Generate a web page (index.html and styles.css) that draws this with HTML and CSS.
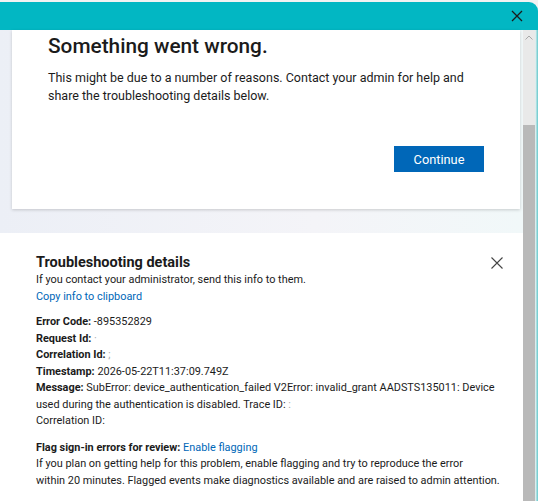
FILE: index.html
```html
<!DOCTYPE html>
<html>
<head>
<meta charset="utf-8">
<link rel="stylesheet" href="styles.css">
</head>
<body>
<div class="window">
  <div class="titlebar">
    <svg class="title-close" width="12" height="12" viewBox="0 0 12 12"><path d="M1 1L11 11M11 1L1 11" stroke="#1b1b1b" stroke-width="1.3" fill="none"/></svg>
  </div>
  <div class="main">
    <div class="content">
      <div class="card">
        <h1 class="title">Something went wrong.</h1>
        <p class="lead">This might be due to a number of reasons. Contact your admin for help and share the troubleshooting details below.</p>
        <div class="actions"><button class="btn">Continue</button></div>
      </div>
      <div class="backdrop"></div>
      <div class="details">
        <div class="details-head">
          <h2 class="details-title">Troubleshooting details</h2>
          <svg class="details-close" width="12" height="12" viewBox="0 0 12 12"><path d="M0.5 0.5L11.5 11.5M11.5 0.5L0.5 11.5" stroke="#444" stroke-width="1.1" fill="none"/></svg>
        </div>
        <div class="line">If you contact your administrator, send this info to them.</div>
        <div class="line"><a class="link">Copy info to clipboard</a></div>
        <div class="info">
          <div class="line"><b>Error Code:</b> -895352829</div>
          <div class="line"><b>Request Id:</b> <span class="dim">·</span></div>
          <div class="line"><b>Correlation Id:</b> <span class="dim">;</span></div>
          <div class="line"><b>Timestamp:</b> 2026-05-22T11:37:09.749Z</div>
          <div class="line"><b>Message:</b> SubError: device_authentication_failed V2Error: invalid_grant AADSTS135011: Device used during the authentication is disabled. Trace ID: <span class="dim">:</span></div>
          <div class="line">Correlation ID:</div>
        </div>
        <div class="flag">
          <div class="line"><b>Flag sign-in errors for review:</b> <a class="link">Enable flagging</a></div>
          <div class="line">If you plan on getting help for this problem, enable flagging and try to reproduce the error<br>within 20 minutes. Flagged events make diagnostics available and are raised to admin attention.</div>
        </div>
      </div>
    </div>
    <div class="scrollbar">
      <div class="track">
        <svg class="arrow" width="8" height="5" viewBox="0 0 8 5"><path d="M0.5 4.5L4 1L7.5 4.5" stroke="#a8a8a8" fill="none"/></svg>
      </div>
      <div class="thumb"></div>
    </div>
    <div class="edge"></div>
  </div>
</div>
</body>
</html>
```

FILE: styles.css
```css
* { box-sizing: border-box; }
html, body { margin: 0; padding: 0; }
body {
  width: 538px;
  height: 501px;
  overflow: hidden;
  background: #f2f2f2;
  font-family: "Roboto", "Noto Sans", sans-serif;
  color: #1b1b1b;
}
.window {
  display: flex;
  flex-direction: column;
  height: 501px;
  padding-top: 2px;
}
.titlebar {
  height: 28px;
  background: #02b7c3;
  border-top-right-radius: 9px;
  display: flex;
  justify-content: flex-end;
  align-items: center;
  padding-right: 15px;
  flex: none;
}
.title-close { display: block; }
.main {
  flex: 1;
  display: flex;
  min-height: 0;
}
.content {
  flex: 1;
  display: flex;
  flex-direction: column;
  background: linear-gradient(90deg, #eceff6 0%, #f4f4f8 60%, #f1f8f9 100%);
}
.card {
  margin-left: 12px;
  margin-right: 3px;
  height: 179px;
  background: #fff;
  box-shadow: 0 1px 3px rgba(0,0,0,0.18);
  padding: 3px 36px 0 36px;
  display: flex;
  flex-direction: column;
  flex: none;
}
.title {
  margin: 0;
  font-size: 20.8px;
  font-weight: 500;
  line-height: 26px;
  color: #1b1b1b;
}
.lead {
  margin: 10px 0 0 0;
  font-size: 12.5px;
  line-height: 18px;
  color: #1b1b1b;
}
.actions {
  display: flex;
  justify-content: flex-end;
  margin-top: 41px;
}
.btn {
  width: 90px;
  height: 26px;
  background: #0067b8;
  color: #fff;
  border: none;
  font-family: inherit;
  font-size: 12.8px;
  padding: 0;
}
.backdrop { height: 24px; flex: none; }
.details {
  flex: 1;
  background: #fff;
  padding: 21px 20px 0 36px;
  font-size: 10.9px;
  line-height: 16.5px;
}
.details-head {
  display: flex;
  justify-content: space-between;
  align-items: center;
  padding-right: 0;
}
.details-title {
  margin: 0;
  font-size: 14.5px;
  font-weight: 700;
  line-height: 18px;
}
.line { white-space: normal; }
.link { color: #0067b8; }
.info { margin-top: 9px; }
.flag { margin-top: 10px; }
.dim { color: #aaa; }
b { font-weight: 700; }
.scrollbar {
  width: 12px;
  display: flex;
  flex-direction: column;
  flex: none;
}
.track {
  height: 95px;
  background: #e9e9e9;
  display: flex;
  justify-content: center;
  padding-top: 5px;
}
.arrow { display: block; }
.thumb { flex: 1; background: #b9b9b9; }
.edge { width: 3px; background: linear-gradient(90deg, #f4f4f4, #62c8cc); flex: none; }
```
